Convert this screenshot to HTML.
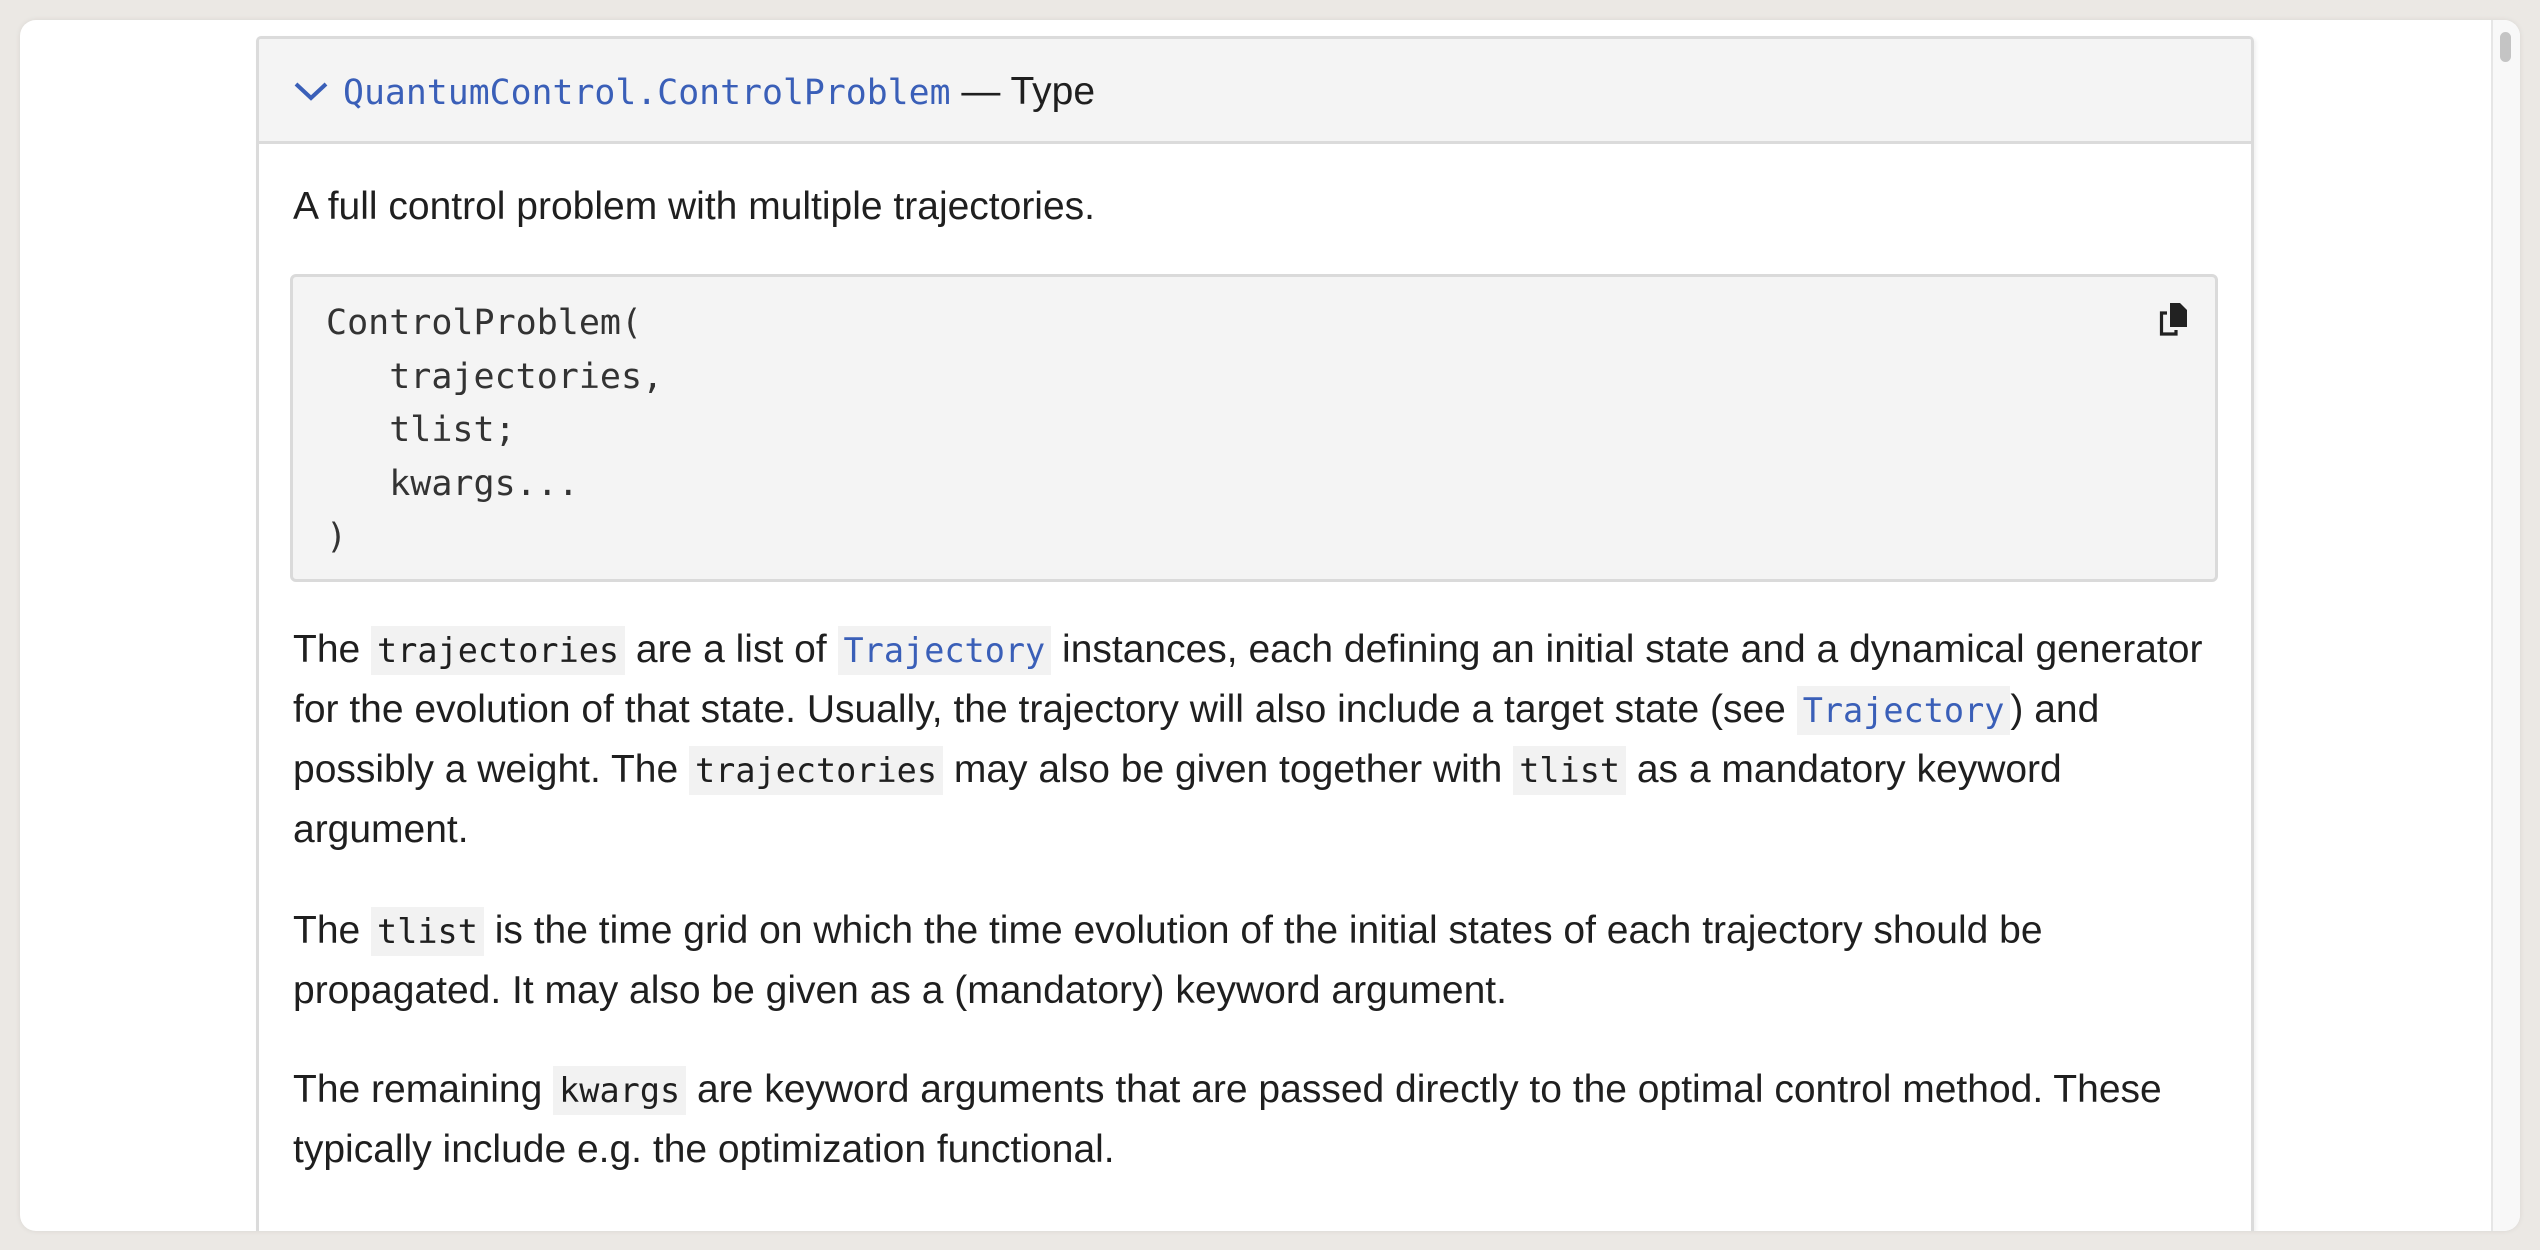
<!DOCTYPE html>
<html><head><meta charset="utf-8"><style>
html,body{margin:0;padding:0;}
body{width:2540px;height:1250px;background:#ebe8e4;position:relative;overflow:hidden;font-family:"Liberation Sans",sans-serif;color:#1f1f1f;}
.panel{position:absolute;left:20px;top:20px;width:2500px;height:1211px;background:#fff;border-radius:16px;overflow:hidden;box-shadow:0 0 6px rgba(0,0,0,.08);}
.sb{position:absolute;left:2471px;top:0;width:29px;height:1211px;background:#f8f8f8;border-left:2px solid #e6e6e6;}
.thumb{position:absolute;left:7px;top:12px;width:11px;height:30px;border-radius:6px;background:#c4c4c4;}
.box{position:absolute;left:236px;top:16px;width:1992px;height:1195px;border:3px solid #dbdbdb;border-bottom:none;border-radius:5px 5px 0 0;box-shadow:2px 2px 4px rgba(0,0,0,.06);overflow:hidden;}
.hdr{height:102px;background:#f4f4f4;border-bottom:3px solid #dbdbdb;position:relative;}
.hdr .t{position:absolute;left:84px;top:31px;font-size:39px;white-space:nowrap;}
.mono{font-family:"DejaVu Sans Mono","Liberation Mono",monospace;}
.blue{color:#3a5fb8;}
.chev{position:absolute;left:34px;top:41px;}
p{position:absolute;left:0;margin:0;font-size:39px;line-height:60px;white-space:nowrap;}
.c{font-family:"DejaVu Sans Mono","Liberation Mono",monospace;font-size:33.5px;background:#f2f2f2;padding:5px 6px;}
.code{position:absolute;left:31px;top:235px;width:1922px;height:302px;background:#f4f4f4;border:3px solid #dadada;border-radius:6px;}
.code pre{margin:0;position:absolute;left:33px;top:20px;font-family:"DejaVu Sans Mono","Liberation Mono",monospace;font-size:35px;line-height:53.5px;color:#333;}
.body{position:absolute;left:34px;top:0;}
</style></head><body>
<div class="panel">
 <div class="box">
  <div class="hdr">
   <svg class="chev" width="36" height="22" viewBox="0 0 36 22"><path d="M3 4 L18 18 L33 4" fill="none" stroke="#3a5fb8" stroke-width="4"/></svg>
   <div class="t"><span class="mono blue" style="font-size:34.8px">QuantumControl.ControlProblem</span> — Type</div>
  </div>
  <div class="body">
   <p style="top:138px">A full control problem with multiple trajectories.</p>
  </div>
  <div class="code">
   <pre>ControlProblem(
   trajectories,
   tlist;
   kwargs...
)</pre>
   <svg style="position:absolute;left:1865px;top:24px" width="34" height="38" viewBox="0 0 34 38">
    <path d="M9 12 H3.5 V33 H18 V29" fill="none" stroke="#222" stroke-width="3.2"/>
    <path d="M12 2 H22 L29 9 V26 H12 Z" fill="#222"/>
   </svg>
  </div>
  <div class="body">
   <p style="top:581px">The <span class="c">trajectories</span> are a list of <span class="c blue">Trajectory</span> instances, each defining an initial state and a dynamical generator</p>
   <p style="top:641px">for the evolution of that state. Usually, the trajectory will also include a target state (see <span class="c blue">Trajectory</span>) and</p>
   <p style="top:701px">possibly a weight. The <span class="c">trajectories</span> may also be given together with <span class="c">tlist</span> as a mandatory keyword</p>
   <p style="top:761px">argument.</p>
   <p style="top:862px">The <span class="c">tlist</span> is the time grid on which the time evolution of the initial states of each trajectory should be</p>
   <p style="top:922px">propagated. It may also be given as a (mandatory) keyword argument.</p>
   <p style="top:1021px">The remaining <span class="c">kwargs</span> are keyword arguments that are passed directly to the optimal control method. These</p>
   <p style="top:1081px">typically include e.g. the optimization functional.</p>
  </div>
 </div>
 <div class="sb"><div class="thumb"></div></div>
</div>
</body></html>
